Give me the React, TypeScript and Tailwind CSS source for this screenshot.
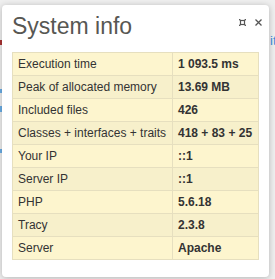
import React from "react";

const rows: [string, string][] = [
  ["Execution time", "1 093.5 ms"],
  ["Peak of allocated memory", "13.69 MB"],
  ["Included files", "426"],
  ["Classes + interfaces + traits", "418 + 83 + 25"],
  ["Your IP", "::1"],
  ["Server IP", "::1"],
  ["PHP", "5.6.18"],
  ["Tracy", "2.3.8"],
  ["Server", "Apache"],
];

const App: React.FC = () => {
  return (
    <div className="relative w-[275px] h-[279px] overflow-hidden bg-[#efefef] pt-[5px] pl-[2px] font-['Liberation_Sans',Arial,sans-serif]">
      {/* bits of the page underneath */}
      <div className="absolute left-0 top-[40px] flex flex-col w-[2px]">
        <div className="h-[5px] bg-[#a33]" />
        <div className="h-[4px] mt-[44px] bg-[#6aaee6]" />
        <div className="h-[6px] mt-[13px] bg-[#6aaee6]" />
        <div className="h-[4px] mt-[37px] bg-[#6aaee6]" />
      </div>
      <span className="absolute left-[270px] top-[34px] text-[13px] leading-[14px] text-[#3b8ddb]">it</span>

      <div className="relative w-[267px] h-[272px] bg-white rounded-[4px] shadow-[0_1px_6px_rgba(0,0,0,0.25)] px-[10px] pt-[5px]">
        {/* pin + close */}
        <div className="absolute top-[14px] right-[7px] flex items-center gap-[9px] text-[#555]">
          <svg width="7" height="7" viewBox="0 0 7 7" stroke="currentColor" strokeWidth="1.2" fill="none">
            <rect x="1.5" y="1.5" width="4" height="4" />
            <path d="M0 0L1.5 1.5M7 0L5.5 1.5M0 7L1.5 5.5M7 7L5.5 5.5" />
          </svg>
          <svg width="7" height="7" viewBox="0 0 7 7" stroke="currentColor" strokeWidth="1.3" fill="none">
            <path d="M0.5 0.5L6.5 6.5M6.5 0.5L0.5 6.5" />
          </svg>
        </div>
        <h1 className="text-[23px] leading-[32px] text-[#575753] font-normal mb-[10px]">System info</h1>
        <table className="w-[247px] border-collapse text-[12px] leading-[18px] text-[#333]">
          <tbody>
            {rows.map(([k, v], i) => (
              <tr key={k} className={i % 2 === 1 ? "bg-[#f7f0cb]" : "bg-[#fdf5ce]"}>
                <td className="w-[160px] border border-[#e6dfbf] px-[5px] py-[2px]">{k}</td>
                <td className="border border-[#e6dfbf] px-[5px] py-[2px] font-bold">{v}</td>
              </tr>
            ))}
          </tbody>
        </table>
      </div>
    </div>
  );
};

export default App;
